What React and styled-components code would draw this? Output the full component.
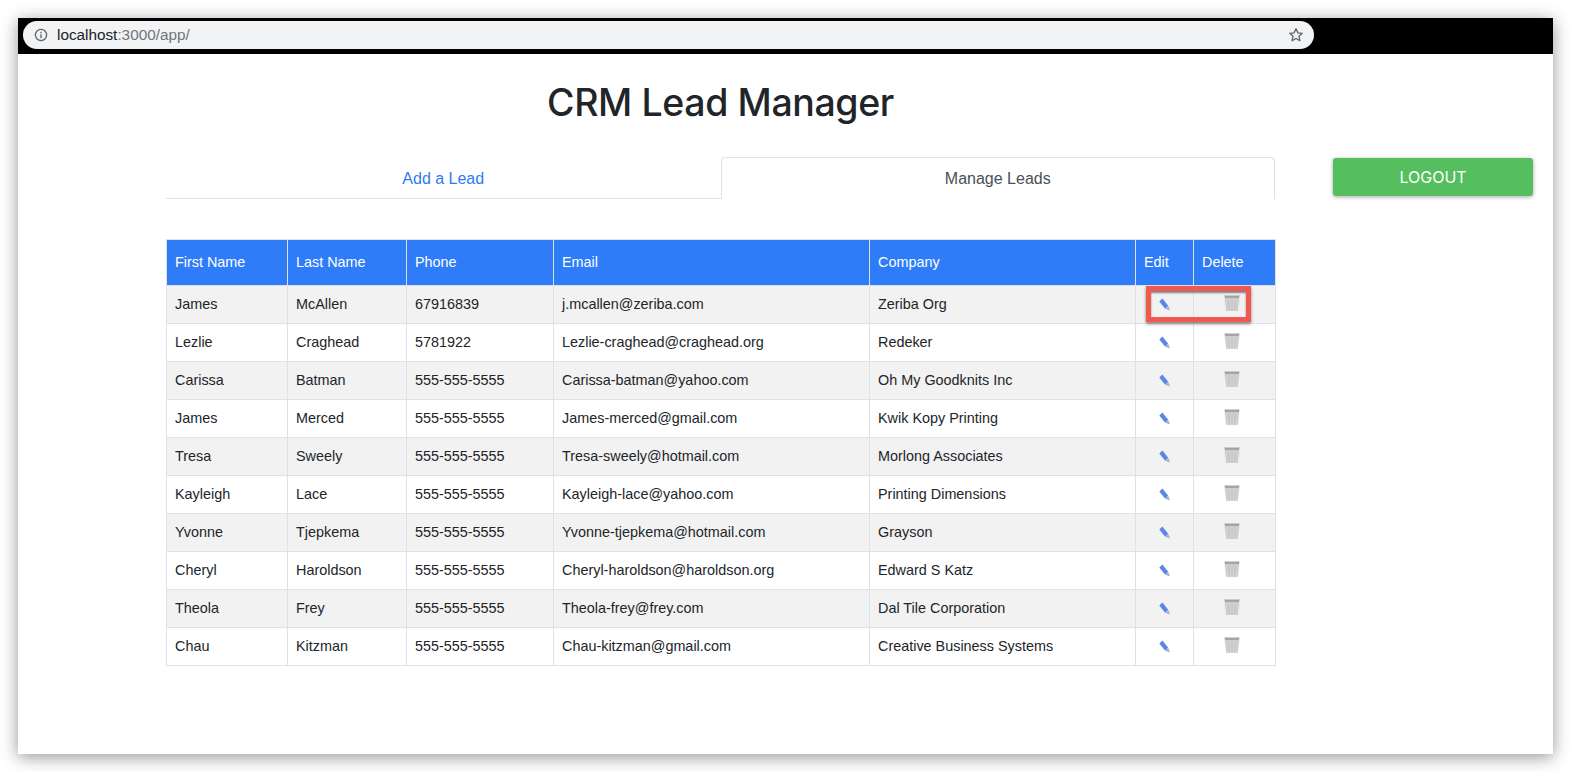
import React from 'react';
import styled, {createGlobalStyle} from 'styled-components';

const Global = createGlobalStyle`
  html, body {
    margin: 0;
    padding: 0;
    background: #fff;
    font-family: "Liberation Sans", Arial, sans-serif;
  }
  * { box-sizing: border-box; }
`

const Page = styled.div`
  width: 1571px;
  height: 772px;
  padding: 18px 18px 18px 18px;
  overflow: hidden;
`
const Window = styled.div`
  height: 736px;
  background: #fff;
  box-shadow: 0 3px 16px rgba(0, 0, 0, .42);
`
const ChromeBar = styled.div`
  height: 36px;
  background: #000;
  padding: 3px 0 5px 5px;
`
const AddressPill = styled.div`
  width: 1291px;
  height: 28px;
  border-radius: 14px;
  background: #f1f3f4;
  display: flex;
  align-items: center;
  padding: 0 10px 0 11px;
  font-size: 15.3px;
  color: #202124;
`
const Url = styled.span`
  margin-left: 9px;
  flex: 1;
  span { color: #70757a; }
`
const Main = styled.div`
  display: flex;
  align-items: flex-start;
  padding-left: 148px;
`
const Content = styled.div`
  width: 1109px;
`
const Title = styled.h1`
  margin: 26px 0 32px;
  height: 45px;
  line-height: 45px;
  text-align: center;
  font-family: Inter, "Liberation Sans", sans-serif;
  font-weight: 500;
  font-size: 37.5px;
  letter-spacing: -.4px;
  color: #212529;
`
const Tabs = styled.div`
  display: flex;
  height: 42px;
  border-bottom: 1px solid #dee2e6;
`
const Tab = styled.div`
  flex: 1;
  height: 42px;
  display: flex;
  align-items: center;
  justify-content: center;
  font-size: 16px;
  color: ${p => p.$active ? '#495057' : '#2f7bf0'};
  background: ${p => p.$active ? '#fff' : 'transparent'};
  border: 1px solid ${p => p.$active ? '#dee2e6' : 'transparent'};
  border-bottom: 0;
  border-radius: 4px 4px 0 0;
`
const TableWrap = styled.div`
  position: relative;
  margin-top: 40px;
`
const Grid = styled.table`
  width: 1109px;
  table-layout: fixed;
  border-collapse: collapse;
  font-size: 14.4px;
  color: #212529;
`
const Th = styled.th`
  height: 46px;
  padding: 0 8px 2px;
  text-align: left;
  font-weight: 400;
  color: #fff;
  background: #2f7cf8;
  border: 1px solid #dee2e6;
`
const Row = styled.tr`
  background: ${p => p.$odd ? '#f2f2f2' : '#fff'};
`
const Td = styled.td`
  height: 38px;
  padding: 0 8px 2px;
  border: 1px solid #dee2e6;
  white-space: nowrap;
`
const IconCell = styled(Td)`
  padding: 0;
  padding-left: ${p => p.$left ? '30px' : 0};
  svg { display: block; margin: ${p => p.$left ? '-3px 0 0' : '-1px auto 0'}; }
`
const Highlight = styled.div`
  position: absolute;
  left: 980px;
  top: 47px;
  width: 105px;
  height: 36px;
  border: 5px solid #f2584f;
  box-shadow: inset 0 2px 2px rgba(50, 50, 50, .6), 0 2px 3px rgba(0, 0, 0, .45);
  pointer-events: none;
`
const Logout = styled.button`
  margin: 104px 0 0 58px;
  width: 200px;
  height: 38px;
  border: 0;
  border-radius: 3px;
  background: #55bf60;
  color: #fff;
  font-family: Inter, "Liberation Sans", sans-serif;
  font-size: 16px;
  box-shadow: 0 1px 4px rgba(0, 0, 0, .35);
`

const InfoIcon = () => (
  <svg width="14" height="14" viewBox="0 0 14 14" fill="none" stroke="#5f6368" strokeWidth="1.3">
    <circle cx="7" cy="7" r="5.6"/>
    <path d="M7 6.2v4M7 3.8v1.4"/>
  </svg>
)

const StarIcon = () => (
  <svg width="16" height="16" viewBox="0 0 16 16" fill="none" stroke="#5f6368" strokeWidth="1.3" strokeLinejoin="round">
    <path d="M8 1.8l1.9 4 4.4.5-3.3 3 .9 4.4L8 11.5l-3.9 2.2.9-4.4-3.3-3 4.4-.5z"/>
  </svg>
)

const PencilIcon = () => (
  <svg width="12" height="13" viewBox="0 0 12 13">
    <path d="M.3 3.6L3.4.4l5.8 7.4-3 3z" fill="#5a86e8"/>
    <path d="M6.2 10.8l3-3 1.9 4.8z" fill="#9fb2d6"/>
  </svg>
)

const TrashIcon = () => (
  <svg width="16" height="16" viewBox="0 0 16 16">
    <path d="M.4.6h15.2L15 3H1z" fill="#a2a2a2"/>
    <path d="M1.1 3h13.8l-1.4 12.6H2.5z" fill="#d2d2d2" stroke="#b4b4b4" strokeWidth=".5"/>
    <path d="M4.6 4.5l.6 9.8M8 4.5v9.8M11.4 4.5l-.6 9.8" stroke="#bdbdbd" strokeWidth=".9"/>
  </svg>
)

const columns = ['First Name', 'Last Name', 'Phone', 'Email', 'Company', 'Edit', 'Delete']
const widths = [121, 119, 147, 316, 266, 58, 82]

const leads = [
  ['James', 'McAllen', '67916839', 'j.mcallen@zeriba.com', 'Zeriba Org'],
  ['Lezlie', 'Craghead', '5781922', 'Lezlie-craghead@craghead.org', 'Redeker'],
  ['Carissa', 'Batman', '555-555-5555', 'Carissa-batman@yahoo.com', 'Oh My Goodknits Inc'],
  ['James', 'Merced', '555-555-5555', 'James-merced@gmail.com', 'Kwik Kopy Printing'],
  ['Tresa', 'Sweely', '555-555-5555', 'Tresa-sweely@hotmail.com', 'Morlong Associates'],
  ['Kayleigh', 'Lace', '555-555-5555', 'Kayleigh-lace@yahoo.com', 'Printing Dimensions'],
  ['Yvonne', 'Tjepkema', '555-555-5555', 'Yvonne-tjepkema@hotmail.com', 'Grayson'],
  ['Cheryl', 'Haroldson', '555-555-5555', 'Cheryl-haroldson@haroldson.org', 'Edward S Katz'],
  ['Theola', 'Frey', '555-555-5555', 'Theola-frey@frey.com', 'Dal Tile Corporation'],
  ['Chau', 'Kitzman', '555-555-5555', 'Chau-kitzman@gmail.com', 'Creative Business Systems'],
]

const App = () => {
  return (
    <Page>
      <Global/>
      <Window>
        <ChromeBar>
          <AddressPill>
            <InfoIcon/>
            <Url>localhost<span>:3000/app/</span></Url>
            <StarIcon/>
          </AddressPill>
        </ChromeBar>
        <Main>
          <Content>
            <Title>CRM Lead Manager</Title>
            <Tabs>
              <Tab>Add a Lead</Tab>
              <Tab $active>Manage Leads</Tab>
            </Tabs>
            <TableWrap>
              <Grid>
                <colgroup>
                  {widths.map((w, i) => <col key={i} style={{width: w}}/>)}
                </colgroup>
                <thead>
                  <tr>
                    {columns.map(c => <Th key={c}>{c}</Th>)}
                  </tr>
                </thead>
                <tbody>
                  {leads.map((lead, i) => (
                    <Row key={i} $odd={i % 2 === 0}>
                      {lead.map((v, j) => <Td key={j}>{v}</Td>)}
                      <IconCell><PencilIcon/></IconCell>
                      <IconCell $left><TrashIcon/></IconCell>
                    </Row>
                  ))}
                </tbody>
              </Grid>
              <Highlight/>
            </TableWrap>
          </Content>
          <Logout>LOGOUT</Logout>
        </Main>
      </Window>
    </Page>
  );
};

export default App;
